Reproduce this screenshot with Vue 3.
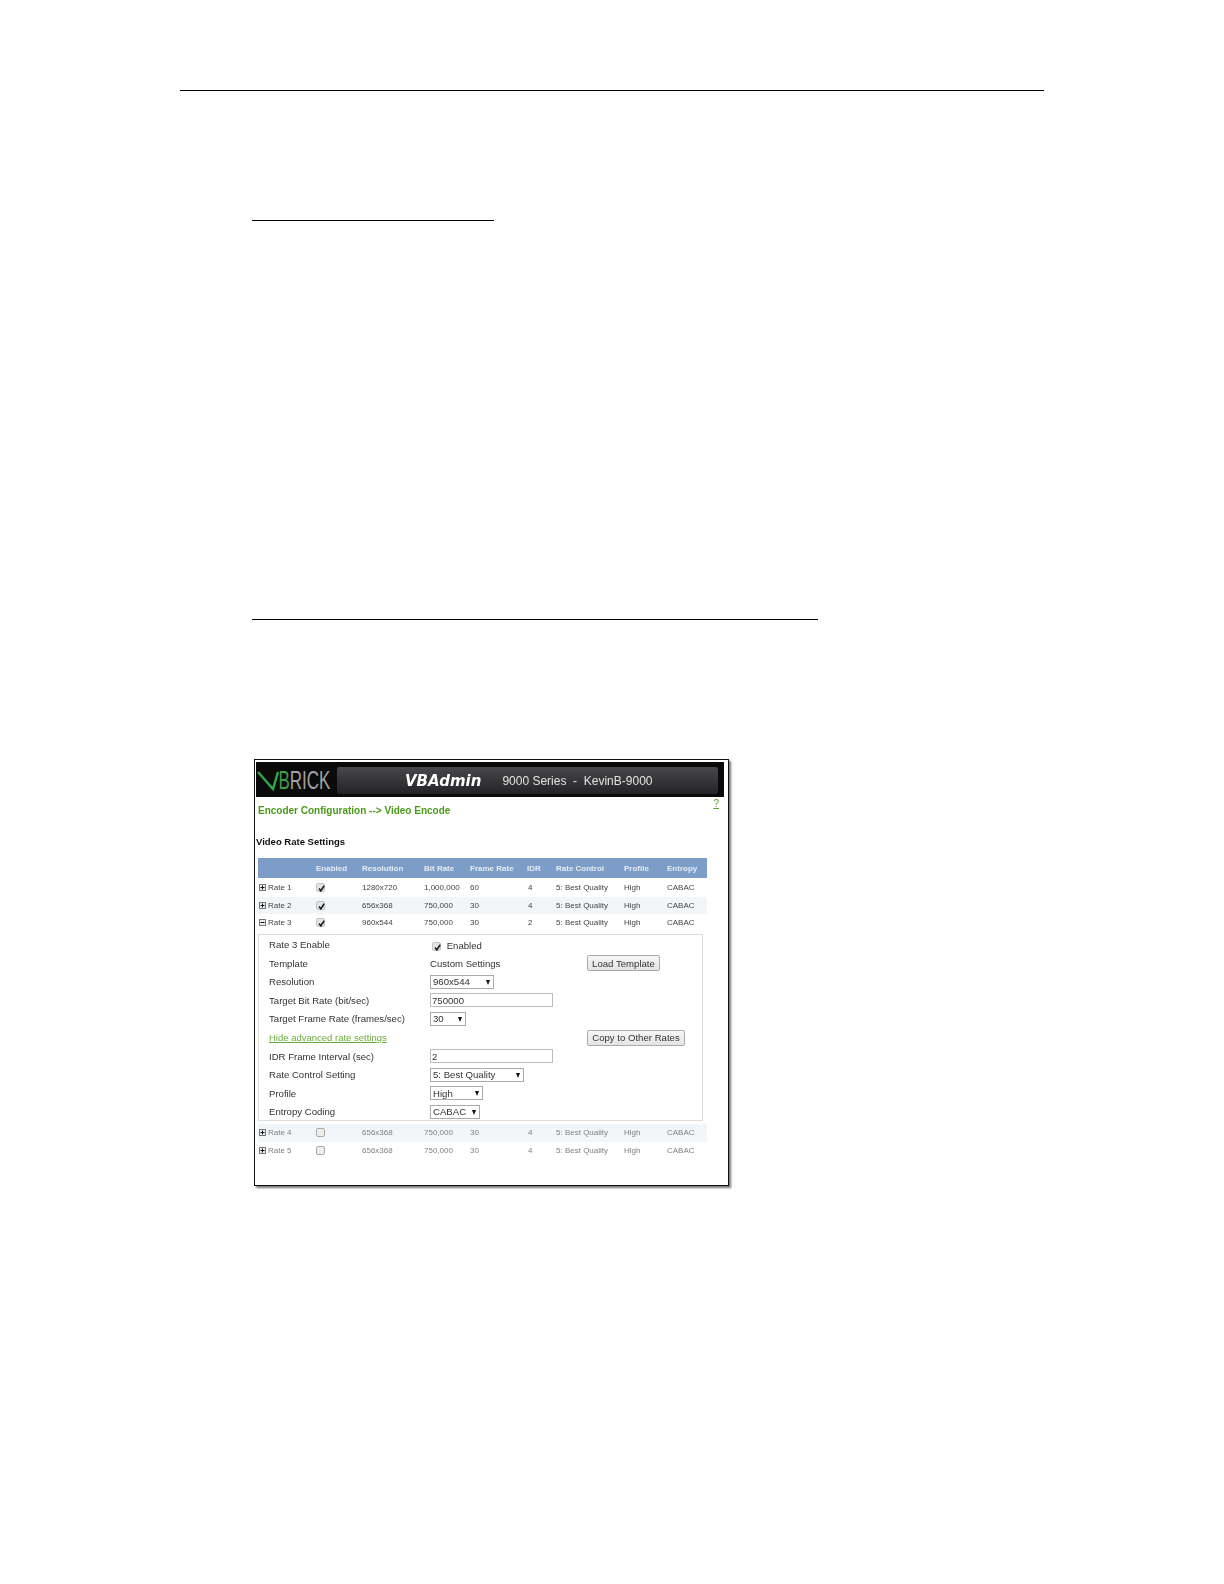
<template>
  <div class="page">
    <div class="rule rule-top"></div>
    <div class="rule rule-short"></div>
    <div class="rule rule-long"></div>

    <div class="frame">
      <div class="banner">
        <svg class="logo" width="81" height="35" viewBox="0 0 81 35">
          <path d="M2 10 L17 27 L22 10" fill="none" stroke="#2fa84a" stroke-width="2.4" />
          <text transform="scale(0.68 1)" x="33" y="27" font-family="Liberation Sans, sans-serif" font-size="25" fill="#a2a2a2"><tspan fill="#3f9a4c">B</tspan>RICK</text>
        </svg>
        <div class="banner-panel">
          <span class="app-name">VBAdmin</span>
          <span class="device">9000 Series &nbsp;-&nbsp; KevinB-9000</span>
        </div>
      </div>

      <div class="crumb-row">
        <span class="crumb">Encoder Configuration --&gt; Video Encode</span>
        <a class="help">?</a>
      </div>

      <div class="section-title">Video Rate Settings</div>

      <div class="rate-row rate-head">
        <span></span>
        <span v-for="col in columns" :key="col">{{ col }}</span>
      </div>

      <template v-for="rate in rates" :key="rate.name">
        <div class="rate-row" :class="{ tinted: rate.tinted, off: !rate.enabled }">
          <span class="rate-name">
            <svg class="expander" width="7" height="7" viewBox="0 0 7 7">
              <rect x="0.5" y="0.5" width="6" height="6" fill="#eee" stroke="#777" />
              <path :d="rate.open ? 'M1.5 3.5 H5.5' : 'M1.5 3.5 H5.5 M3.5 1.5 V5.5'" stroke="#111" />
            </svg>
            {{ rate.name }}
          </span>
          <span>
            <span class="check" :class="{ empty: !rate.enabled }">
              <svg v-if="rate.enabled" width="9" height="9" viewBox="0 0 9 9">
                <path d="M2 4.5 L3.8 6.8 L7.2 1.8" fill="none" stroke="#222" stroke-width="1.6" />
              </svg>
            </span>
          </span>
          <span>{{ rate.resolution }}</span>
          <span>{{ rate.bitRate }}</span>
          <span>{{ rate.frameRate }}</span>
          <span class="idr">{{ rate.idr }}</span>
          <span>5: Best Quality</span>
          <span>High</span>
          <span>CABAC</span>
        </div>

        <div v-if="rate.open" class="detail">
          <div class="detail-row">
            <span>Rate 3 Enable</span>
            <span class="enabled-cell">
              <span class="check bare">
                <svg width="9" height="9" viewBox="0 0 9 9">
                  <path d="M2 4.5 L3.8 6.8 L7.2 1.8" fill="none" stroke="#222" stroke-width="1.6" />
                </svg>
              </span>
              Enabled
            </span>
          </div>
          <div class="detail-row">
            <span>Template</span>
            <span>Custom Settings</span>
            <button class="btn" style="width: 73px">Load Template</button>
          </div>
          <div class="detail-row">
            <span>Resolution</span>
            <span class="select" style="width: 64px"><select><option>960x544</option></select></span>
          </div>
          <div class="detail-row">
            <span>Target Bit Rate (bit/sec)</span>
            <input class="field" value="750000" />
          </div>
          <div class="detail-row">
            <span>Target Frame Rate (frames/sec)</span>
            <span class="select" style="width: 36px"><select><option>30</option></select></span>
          </div>
          <div class="detail-row">
            <a class="advanced">Hide advanced rate settings</a>
            <span></span>
            <button class="btn" style="width: 98px">Copy to Other Rates</button>
          </div>
          <div class="detail-row">
            <span>IDR Frame Interval (sec)</span>
            <input class="field" value="2" />
          </div>
          <div class="detail-row">
            <span>Rate Control Setting</span>
            <span class="select" style="width: 94px"><select><option>5: Best Quality</option></select></span>
          </div>
          <div class="detail-row">
            <span>Profile</span>
            <span class="select" style="width: 53px"><select><option>High</option></select></span>
          </div>
          <div class="detail-row">
            <span>Entropy Coding</span>
            <span class="select" style="width: 50px"><select><option>CABAC</option></select></span>
          </div>
        </div>
      </template>
    </div>
  </div>
</template>

<script setup>
const columns = [
  "Enabled",
  "Resolution",
  "Bit Rate",
  "Frame Rate",
  "IDR",
  "Rate Control",
  "Profile",
  "Entropy",
];

const rates = [
  { name: "Rate 1", enabled: true, resolution: "1280x720", bitRate: "1,000,000", frameRate: "60", idr: "4" },
  { name: "Rate 2", enabled: true, tinted: true, resolution: "656x368", bitRate: "750,000", frameRate: "30", idr: "4" },
  { name: "Rate 3", enabled: true, open: true, resolution: "960x544", bitRate: "750,000", frameRate: "30", idr: "2" },
  { name: "Rate 4", enabled: false, tinted: true, resolution: "656x368", bitRate: "750,000", frameRate: "30", idr: "4" },
  { name: "Rate 5", enabled: false, resolution: "656x368", bitRate: "750,000", frameRate: "30", idr: "4" },
];
</script>

<style>
body {
  background: #fff;
}
</style>

<style scoped>
.page {
  height: 1584px;
  overflow: hidden;
  font-family: "Liberation Sans", Arial, sans-serif;
  color: #333;
}

.rule {
  height: 1px;
  background: #000;
}
.rule-top {
  margin: 90px 0 0 180px;
  width: 864px;
}
.rule-short {
  margin: 129px 0 0 252px;
  width: 242px;
}
.rule-long {
  margin: 398px 0 0 252px;
  width: 566px;
}

.frame {
  margin: 139px 0 0 254px;
  width: 473px;
  border: 1px solid #111;
  box-shadow: 2px 2px 2px #777;
  padding: 2px 0 26px;
  filter: blur(0.4px);
  background: #fff;
}

/* Black banner */
.banner {
  display: flex;
  margin: 0 4px 0 1px;
  height: 35px;
  padding: 5px 6px 3px 0;
  box-sizing: border-box;
  background: #0a0a0a;
}
.logo {
  flex: none;
  margin-top: -5px;
}
.banner-panel {
  flex: 1;
  display: flex;
  align-items: center;
  padding-left: 68px;
  background: linear-gradient(#48484c, #242426);
  border-radius: 2px;
}
.app-name {
  font-family: "DejaVu Sans", sans-serif;
  font-size: 15px;
  font-weight: 700;
  font-style: italic;
  color: #fff;
}
.device {
  margin-left: 21px;
  font-size: 12px;
  color: #e2e2e2;
}

.crumb-row {
  display: flex;
  justify-content: space-between;
  margin: 8px 9px 0 3px;
  line-height: 12px;
}
.crumb {
  font-size: 10px;
  font-weight: 700;
  color: #4c9a1c;
}
.help {
  margin-top: -7px;
  font-size: 10px;
  color: #5aa02c;
  text-decoration: underline;
}

.section-title {
  margin: 19px 0 10px 1px;
  font-size: 9.5px;
  line-height: 12px;
  font-weight: 700;
  color: #111;
}

/* Rates table */
.rate-row {
  display: grid;
  grid-template-columns: 58px 46px 62px 46px 57px 29px 68px 43px 40px;
  align-items: center;
  margin-left: 3px;
  width: 449px;
  height: 17.5px;
  font-size: 8px;
  color: #444;
}
.rate-head {
  height: 20px;
  margin-bottom: 1px;
  background: #7b9dc8;
  color: #e6edf6;
  font-weight: 700;
}
.tinted {
  background: #f3f6f9;
}
.off {
  color: #808080;
}
.rate-name {
  display: flex;
  align-items: center;
  gap: 2px;
  padding-left: 1px;
}
.expander {
  flex: none;
}
.idr {
  padding-left: 1px;
}
.check {
  display: inline-block;
  box-sizing: border-box;
  width: 9px;
  height: 9px;
  vertical-align: middle;
  background: #e4e4e4;
  border: 0.5px solid #c4c4c4;
  border-radius: 2px;
}
.check svg {
  display: block;
}
.check.empty {
  background: #eee;
  border-color: #aaa;
}
.check.bare {
  margin-right: 3px;
}

/* Expanded rate settings */
.detail {
  display: grid;
  grid-auto-rows: 18.55px;
  margin: 2.5px 0 3px 3px;
  width: 445px;
  padding: 0.5px 0 0 10px;
  box-sizing: border-box;
  height: 187px;
  border: 1px solid #dcdcdc;
  font-size: 9.6px;
}
.detail-row {
  display: grid;
  grid-template-columns: 161px 157px 1fr;
  align-items: center;
}
.enabled-cell {
  padding-top: 2px;
  margin-left: 2px;
  font-size: 9.6px;
}
.btn {
  height: 16px;
  padding: 0;
  font-family: inherit;
  font-size: 9.6px;
  color: #333;
  background: linear-gradient(#f6f6f6, #e4e4e4);
  border: 1px solid #aaa;
  border-radius: 2px;
}
.field {
  width: 123px;
  height: 14px;
  box-sizing: border-box;
  padding: 0 0 0 1px;
  font-family: inherit;
  font-size: 9.6px;
  color: #333;
  border: 1px solid #bbb;
  outline: none;
}
.select {
  position: relative;
  display: block;
  height: 14px;
  box-sizing: border-box;
  border: 1px solid #aaa;
  background: #fff;
}
.select::after {
  content: "";
  position: absolute;
  right: 3px;
  top: 4px;
  border: 2.5px solid transparent;
  border-top: 5px solid #111;
  border-bottom: 0;
}
.select select {
  display: block;
  width: 100%;
  height: 12px;
  padding: 0 0 0 2px;
  font-family: inherit;
  font-size: 9.6px;
  color: #333;
  border: 0;
  background: none;
  appearance: none;
  outline: none;
}
.advanced {
  font-size: 9.5px;
  color: #6bab3a;
  text-decoration: underline;
  white-space: nowrap;
}
</style>
